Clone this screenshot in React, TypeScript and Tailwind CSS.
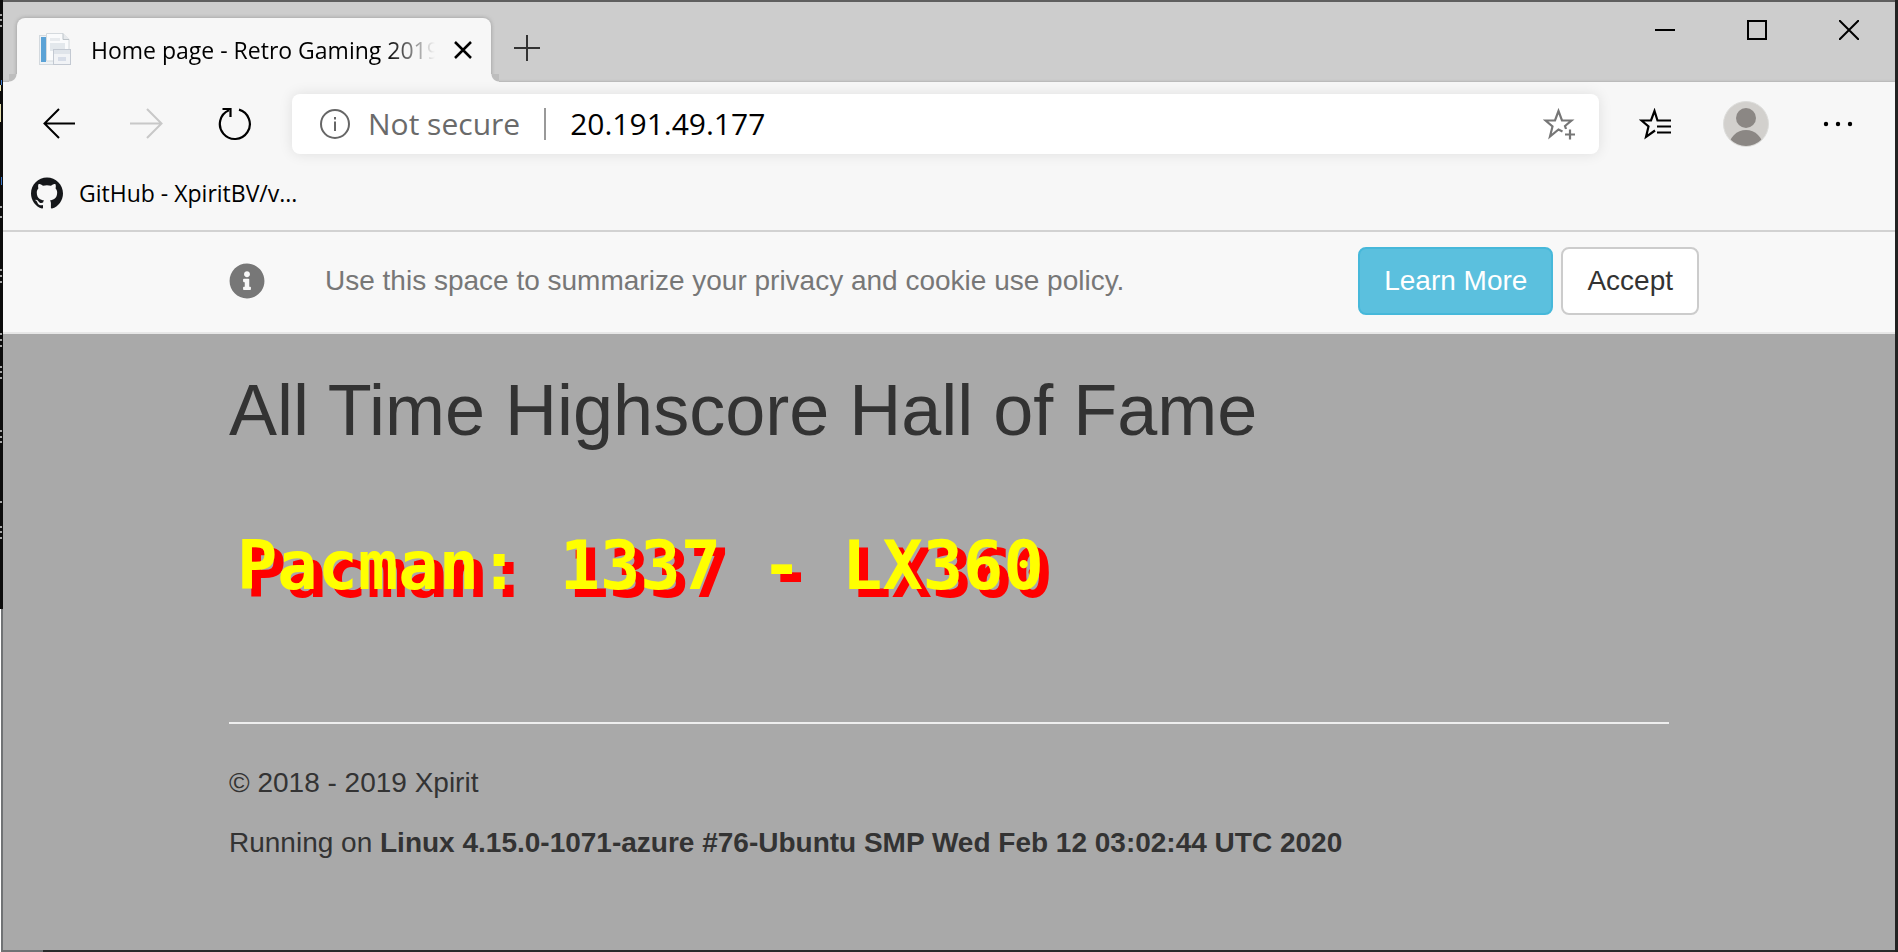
import { SiGithub } from "react-icons/si";
import { FaInfoCircle } from "react-icons/fa";

const ticks = [14, 19, 25, 206, 216, 269, 275, 281, 333, 339, 345, 366, 371, 377, 430, 436, 441, 501, 526, 531, 537];

function DesktopEdge() {
  return (
    <div className="flex w-[3px] shrink-0 flex-col bg-white">
      <svg width="3" height="609" className="block shrink-0 bg-[#0c0c0c]" aria-hidden="true">
        {ticks.map((y) => (
          <rect key={y} x="0" y={y} width="2" height="2" fill="#a5a5a5" />
        ))}
        <rect x="1" y="80" width="1" height="5" fill="#3b78c8" />
        <rect x="0" y="85" width="1" height="6" fill="#e5dfae" />
        <rect x="0" y="104" width="1" height="18" fill="#e5dfae" />
        <rect x="1" y="177" width="1" height="8" fill="#3b78c8" />
      </svg>
      <div className="ml-px flex-1 bg-[#707274]" />
    </div>
  );
}

function Favicon() {
  return (
    <svg width="34" height="34" viewBox="0 0 34 34" aria-hidden="true" className="shrink-0">
      <rect x="1.5" y="2.5" width="20" height="29" fill="#eef2f5" stroke="#d3d9de" />
      <rect x="3" y="4" width="5" height="25" fill="#5aa2d6" />
      <path d="M8.5 .5H25l6 6V28H8.500z" fill="#fafbfc" stroke="#d5dade" />
      <path d="M25 .5V6.500h6" fill="#e6e9ec" stroke="#bcc3c8" />
      <rect x="12" y="5" width="10" height="3" fill="#e8ebee" />
      <rect x="12" y="10" width="15" height="8" fill="#e3e8ec" />
      <rect x="15.500" y="16.500" width="17" height="15" fill="#f1f3f6" stroke="#c3c9d2" />
      <rect x="16" y="17" width="16" height="4" fill="#dfe4ea" />
      <rect x="20" y="24" width="8" height="4" fill="#d7dde8" />
    </svg>
  );
}

function TabStrip() {
  return (
    <div className="flex h-20 items-end bg-[#cdcdcd] shadow-[inset_0_-2px_2px_-1px_#b5b5b5]">
      <div className="ml-[6px] h-2 w-2 shrink-0 bg-[radial-gradient(circle_at_0_0,#bdbdbd_7px,#f7f7f7_8px)]" />
      <div className="flex h-16 w-[474px] items-center rounded-t-lg bg-[#f7f7f7] pl-[21px] pr-4 shadow-[0_0_4px_#9a9a9a] [clip-path:inset(-4px_-4px_8px_-4px)] [border-bottom:0] relative">
        <Favicon />
        <span className="ml-[19px] min-w-0 flex-1 overflow-hidden whitespace-nowrap text-[23px] text-black [mask-image:linear-gradient(to_right,black_86%,transparent_100%)]">
          Home page - Retro Gaming 2019
        </span>
        <button aria-label="Close tab" className="ml-4 flex h-8 w-6 items-center justify-center">
          <svg width="18" height="18" viewBox="0 0 18 18" stroke="#000" strokeWidth="2.500">
            <path d="M1 1l16 16M17 1L1 17" />
          </svg>
        </button>
      </div>
      <div className="-ml-[474px] h-2 w-[474px] shrink-0 bg-[#f7f7f7]" />
      <div className="h-2 w-2 shrink-0 bg-[radial-gradient(circle_at_100%_0,#bdbdbd_7px,#f7f7f7_8px)]" />
      <button aria-label="New tab" className="ml-3 mb-5 flex h-7 w-8 items-center justify-center">
        <svg width="26" height="26" viewBox="0 0 26 26" stroke="#333" strokeWidth="2">
          <path d="M13 0v26M0 13h26" />
        </svg>
      </button>
      <div className="ml-auto mr-9 flex gap-[72px] self-start pt-[18px]">
        <button aria-label="Minimize">
          <svg width="20" height="20" viewBox="0 0 20 20" stroke="#000" strokeWidth="2">
            <path d="M0 10h20" />
          </svg>
        </button>
        <button aria-label="Maximize">
          <svg width="20" height="20" viewBox="0 0 20 20" fill="none" stroke="#000" strokeWidth="2">
            <rect x="1" y="1" width="18" height="18" />
          </svg>
        </button>
        <button aria-label="Close">
          <svg width="20" height="20" viewBox="0 0 20 20" stroke="#000" strokeWidth="2">
            <path d="M0 0l20 20M20 0L0 20" />
          </svg>
        </button>
      </div>
    </div>
  );
}

function Toolbar() {
  return (
    <div className="flex items-center pt-3">
      <div className="ml-10 flex shrink-0 items-center gap-[55px]">
        <button aria-label="Back">
          <svg width="32" height="32" viewBox="0 0 32 32" fill="none" stroke="#000" strokeWidth="2">
            <path d="M32 15.500H2M16 1L1.500 15.500L16 30" />
          </svg>
        </button>
        <button aria-label="Forward" disabled>
          <svg width="33" height="32" viewBox="0 0 33 32" fill="none" stroke="#c8c8c8" strokeWidth="2">
            <path d="M0 15.500H31M17 1L31.500 15.500L17 30" />
          </svg>
        </button>
        <button aria-label="Refresh">
          <svg width="34" height="34" viewBox="0 0 34 34" fill="none" stroke="#000" strokeWidth="2.200">
            <path d="M21 2.600A15 15 0 1 1 11 3.200" />
            <path d="M4.500 2H12.500V10" />
          </svg>
        </button>
      </div>
      <div className="ml-10 flex h-[60px] flex-1 items-center rounded-lg bg-white pl-7 pr-6 shadow-[0_0_14px_rgba(0,0,0,0.1)]">
        <svg width="30" height="30" viewBox="0 0 30 30" fill="none" stroke="#666" strokeWidth="2" className="shrink-0" aria-hidden="true">
          <circle cx="15" cy="15" r="14" />
          <path d="M15 12.500V22M15 8V10.500" />
        </svg>
        <span className="ml-[18px] shrink-0 text-[30px] leading-10 text-[#6a6a6a]">Not secure</span>
        <span className="ml-6 h-8 w-[2px] shrink-0 bg-[#999]" />
        <input aria-label="Address" defaultValue="20.191.49.177" className="ml-6 min-w-0 flex-1 bg-transparent text-[30px] leading-10 text-black outline-none" />
        <button aria-label="Add to favorites">
          <svg width="32" height="32" viewBox="0 0 32 32" fill="none" stroke="#767676" strokeWidth="2.200">
            <path d="M19.500 23.500L15.500 21.500L7 28.500L9.500 18.500L2.500 12.500H12L15.500 3L19 12.500H28.500L22 18L23 21" />
            <path d="M27 21.500V31.500M22 26.500H32" />
          </svg>
        </button>
      </div>
      <div className="ml-10 mr-[42px] flex shrink-0 items-center">
        <button aria-label="Favorites">
          <svg width="32" height="32" viewBox="0 0 32 32" fill="none" stroke="#000" strokeWidth="2.200">
            <path d="M16 22.500L7 29L9.500 18.500L2.500 12.500H12L15.500 3L18.500 12.500H32M18 18.500H32M18 24.500H32" />
          </svg>
        </button>
        <button aria-label="Profile" className="ml-[52px]">
          <svg width="46" height="46" viewBox="0 0 46 46">
            <clipPath id="avatar"><circle cx="23" cy="23" r="22" /></clipPath>
            <circle cx="23" cy="23" r="22.500" fill="#d2d0cd" stroke="#dddddb" />
            <g clipPath="url(#avatar)" fill="#8b8784">
              <circle cx="23" cy="17" r="10" />
              <circle cx="23" cy="46" r="17" />
            </g>
          </svg>
        </button>
        <button aria-label="Settings and more" className="ml-[54px]">
          <svg width="30" height="6" viewBox="0 0 30 6">
            <circle cx="3" cy="3" r="2.200" /><circle cx="15" cy="3" r="2.200" /><circle cx="27" cy="3" r="2.200" />
          </svg>
        </button>
      </div>
    </div>
  );
}

export default function App() {
  return (
    <div className="flex min-h-screen font-['Open_Sans','Noto_Sans',sans-serif]">
      <DesktopEdge />
      <div className="flex min-w-0 flex-1 flex-col border-t-2 border-[#5f5f5f] bg-[#f7f7f7]">
        <TabStrip />
        <Toolbar />
        <nav className="flex h-[78px] items-center border-b-2 border-[#d2d2d2] pl-7 pt-[2px]">
          <a href="#github" className="flex items-center gap-4 text-[23px] text-black">
            <SiGithub size={32} color="#15171a" />
            GitHub - XpiritBV/v...
          </a>
        </nav>
        <div className="flex flex-1 flex-col bg-[#a9a9a9] font-['Liberation_Sans',Arial,sans-serif] text-[28px] leading-10 text-[#333]">
          <div className="border-b-2 border-[#e7e7e7] bg-[#f8f8f8] px-[226px]">
            <div className="-mr-[30px] flex h-[100px] items-center pb-[2px] text-[#777]">
              <FaInfoCircle size={36} className="shrink-0" />
              <p className="ml-[60px] flex-1">Use this space to summarize your privacy and cookie use policy.</p>
              <a href="#privacy" className="rounded-lg border-2 border-[#46b8da] bg-[#5bc0de] px-6 py-3 text-white">Learn More</a>
              <button className="ml-2 rounded-lg border-2 border-[#ccc] bg-white px-6 py-3 text-[#333]">Accept</button>
            </div>
          </div>
          <main className="px-[226px]">
            <h1 className="mt-9 text-[72px] leading-[80px]">All Time Highscore Hall of Fame</h1>
            <p className="mt-[68px] pl-2 font-['DejaVu_Sans_Mono',monospace] text-[67px] font-bold leading-[96px] text-[#ff0] [text-shadow:9px_8px_0_#f00]">
              Pacman: 1337 - LX360
            </p>
            <hr className="mt-[108px] border-t-2 border-[#eee]" />
            <footer className="mt-[39px] pb-16">
              <p>© 2018 - 2019 Xpirit</p>
              <p className="mt-5">
                Running on <strong>Linux 4.15.0-1071-azure #76-Ubuntu SMP Wed Feb 12 03:02:44 UTC 2020</strong>
              </p>
            </footer>
          </main>
        </div>
        <div className="flex h-[2px] bg-[#2a2a2a]">
          <div className="w-10 bg-[#707274]" />
        </div>
      </div>
      <div className="w-[3px] shrink-0 bg-[#222]" />
    </div>
  );
}
